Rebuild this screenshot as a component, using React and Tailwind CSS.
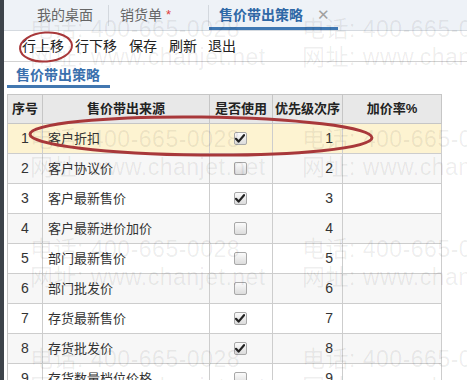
import React from "react";

const rows = [
  { n: 1, name: "客户折扣", on: true },
  { n: 2, name: "客户协议价", on: false },
  { n: 3, name: "客户最新售价", on: true },
  { n: 4, name: "客户最新进价加价", on: false },
  { n: 5, name: "部门最新售价", on: false },
  { n: 6, name: "部门批发价", on: false },
  { n: 7, name: "存货最新售价", on: true },
  { n: 8, name: "存货批发价", on: true },
  { n: 9, name: "存货数量档位价格", on: false },
];

function Check({ on }) {
  return (
    <div className="w-[13px] h-[13px] rounded-[2px] border border-[#a8a8a8] bg-gradient-to-b from-[#fbfbfb] to-[#dcdcdc] flex items-center justify-center">
      {on && (
        <svg width="10" height="9" viewBox="0 0 10 9">
          <path d="M1 4.8 L3.6 7.6 L9 1.2" fill="none" stroke="#222" strokeWidth="2.2" strokeLinecap="round" strokeLinejoin="round" />
        </svg>
      )}
    </div>
  );
}

function Watermarks() {
  const ys = [30, 140, 250, 360];
  const xs = [30, 302];
  const items = [];
  ys.forEach((y, i) => {
    xs.forEach((x, j) => {
      items.push(
        <div key={`a${i}${j}`} className="absolute whitespace-nowrap text-[23px] leading-none tracking-[0.5px] text-[rgba(0,0,0,0.07)]" style={{ left: x, top: y - 12 }}>
          电话: 400-665-0028
        </div>
      );
      items.push(
        <div key={`b${i}${j}`} className="absolute whitespace-nowrap text-[23px] leading-none tracking-[0.5px] text-[rgba(0,0,0,0.07)]" style={{ left: x, top: y + 16 }}>
          网址: www.chanjet.net
        </div>
      );
    });
  });
  return <div className="absolute inset-0 pointer-events-none">{items}</div>;
}

export default function App() {
  return (
    <div
      className="relative w-[467px] h-[380px] overflow-hidden flex bg-white text-[#333]"
      style={{ fontFamily: '"Liberation Sans", "Noto Sans CJK SC", sans-serif' }}
    >
      <div className="w-[4px] shrink-0 bg-[#3d434a]" />
      <div className="flex-1 flex flex-col">
        {/* top tabs */}
        <div className="h-[31px] shrink-0 bg-[#eef2f7] border-b border-[#d5dae0] flex items-stretch text-[14px]">
          <div className="w-[104px] pl-[33px] flex items-center pt-[3px] border-b-[3px] border-transparent text-[#666]">我的桌面</div>
          <div className="w-px h-[21px] bg-[#d3d8de] self-center" />
          <div className="w-[99px] pl-[11px] flex items-center pt-[3px] border-b-[3px] border-transparent text-[#666]">
            销货单<span className="ml-[4px] text-[#e04040] text-[13px]">*</span>
          </div>
          <div className="w-px h-[21px] bg-[#d3d8de] self-center" />
          <div className="w-[129px] pl-[10px] flex items-center pt-[3px] border-b-[3px] border-[#3f78b3] text-[#2f68a6] font-bold">
            售价带出策略
            <span className="ml-[14px] text-[#a0a0a0] font-normal text-[15px]">✕</span>
          </div>
        </div>
        {/* toolbar */}
        <div className="h-[31px] shrink-0 border-b border-[#d2d2d2] flex items-center pl-[18px] gap-[11px] text-[14px] text-[#222]">
          <span>行上移</span>
          <span>行下移</span>
          <span className="ml-[1px]">保存</span>
          <span className="ml-[1px]">刷新</span>
          <span>退出</span>
        </div>
        {/* section */}
        <div className="pl-[3px]">
          <div className="h-[26px] flex items-end">
            <div className="w-[103px] pl-[9px] leading-[20px] border-b-[3px] border-[#4277b0] text-[14px] font-bold text-[#3a70ad]">
              售价带出策略
            </div>
          </div>
          {/* table */}
          <div className="mt-[6px] w-[435px] border-l border-t border-[#c6c6c6] text-[13px]">
            <div className="flex h-[29px] bg-[#e8e8e8] border-b border-[#c6c6c6] font-bold text-[#222]">
              <div className="w-[35px] border-r border-[#c6c6c6] flex items-center justify-center">序号</div>
              <div className="w-[167px] border-r border-[#c6c6c6] flex items-center justify-center">售价带出来源</div>
              <div className="w-[63px] border-r border-[#c6c6c6] flex items-center justify-center">是否使用</div>
              <div className="w-[70px] border-r border-[#c6c6c6] flex items-center justify-center">优先级次序</div>
              <div className="w-[99px] border-r border-[#c6c6c6] flex items-center justify-center">加价率%</div>
            </div>
            {rows.map((r) => {
              const bg = r.n === 1 ? "bg-[#fdf3d1]" : r.n % 2 === 0 ? "bg-[#f7f7f7]" : "bg-white";
              return (
                <div key={r.n} className={`flex h-[30px] border-b border-[#cdcdcd] ${bg}`}>
                  <div className="w-[35px] border-r border-[#cdcdcd] flex items-center justify-center text-[14px]">{r.n}</div>
                  <div className="w-[167px] border-r border-[#cdcdcd] flex items-center pl-[5px]">{r.name}</div>
                  <div className="w-[63px] border-r border-[#cdcdcd] flex items-center justify-center pr-[2px]">
                    <Check on={r.on} />
                  </div>
                  <div className="w-[70px] border-r border-[#cdcdcd] flex items-center justify-end pr-[9px] text-[14px]">{r.n}</div>
                  <div className="w-[99px] border-r border-[#cdcdcd]" />
                </div>
              );
            })}
          </div>
        </div>
      </div>
      <Watermarks />
      <svg className="absolute inset-0 pointer-events-none" width="467" height="380">
        <ellipse cx="46" cy="47" rx="26" ry="14.5" transform="rotate(-4 46 47)" fill="none" stroke="#a8383a" strokeWidth="2" />
        <ellipse cx="201" cy="136" rx="171" ry="19" transform="rotate(0.6 201 136)" fill="none" stroke="#a8383a" strokeWidth="3" />
      </svg>
    </div>
  );
}
